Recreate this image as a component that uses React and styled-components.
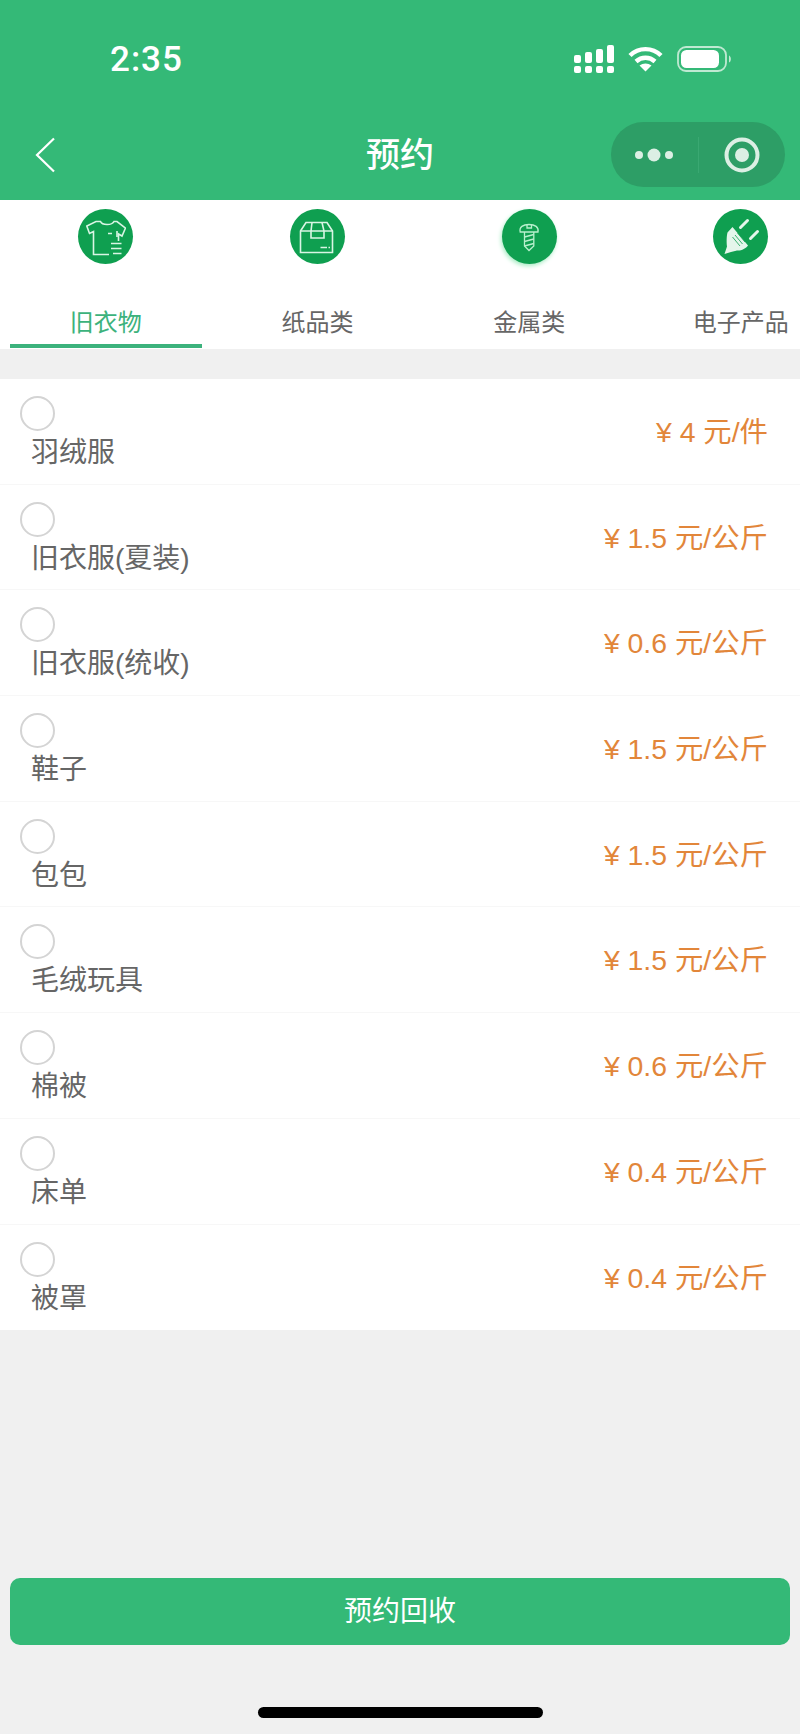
import React from 'react';
import styled, { createGlobalStyle } from 'styled-components';

const categories = [
	{ key: 'clothes', label: '旧衣物', active: true },
	{ key: 'paper', label: '纸品类' },
	{ key: 'metal', label: '金属类', glow: true },
	{ key: 'electronic', label: '电子产品' },
];

const items = [
	{ name: '羽绒服', price: '¥ 4 元/件' },
	{ name: '旧衣服(夏装)', price: '¥ 1.5 元/公斤' },
	{ name: '旧衣服(统收)', price: '¥ 0.6 元/公斤' },
	{ name: '鞋子', price: '¥ 1.5 元/公斤' },
	{ name: '包包', price: '¥ 1.5 元/公斤' },
	{ name: '毛绒玩具', price: '¥ 1.5 元/公斤' },
	{ name: '棉被', price: '¥ 0.6 元/公斤' },
	{ name: '床单', price: '¥ 0.4 元/公斤' },
	{ name: '被罩', price: '¥ 0.4 元/公斤' },
];

const SignalIcon = () => (
	<svg width="40" height="28" viewBox="0 0 40 28" fill="#fff">
		<rect x="0" y="10" width="7" height="8" rx="2" />
		<rect x="11" y="7" width="7" height="11" rx="2" />
		<rect x="22" y="4" width="7" height="14" rx="2" />
		<rect x="33" y="0" width="7" height="18" rx="2" />
		<rect x="0" y="21" width="7" height="7" rx="2" />
		<rect x="11" y="21" width="7" height="7" rx="2" />
		<rect x="22" y="21" width="7" height="7" rx="2" />
		<rect x="33" y="21" width="7" height="7" rx="2" />
	</svg>
);

const WifiIcon = () => (
	<svg width="35" height="26" viewBox="0 0 35 26" fill="none" stroke="#fff" strokeWidth="4.4">
		<path d="M2 9.5C10.5 1 24.5 1 33 9.5" />
		<path d="M8 15.5C13.5 10.5 21.5 10.5 27 15.5" />
		<path d="M17.5 25.5L11.5 19.5C15 16.8 20 16.8 23.5 19.5Z" fill="#fff" stroke="none" />
	</svg>
);

const BatteryIcon = () => (
	<svg width="56" height="26" viewBox="0 0 56 26">
		<rect x="1" y="1" width="48" height="24" rx="8" fill="none" stroke="#bfe9d2" strokeWidth="1.8" />
		<rect x="4" y="4" width="38" height="18" rx="5.5" fill="#fff" />
		<path d="M52 9.5C54.5 10.5 54.5 15.5 52 16.5Z" fill="#bfe9d2" />
	</svg>
);

const BackIcon = () => (
	<svg width="20" height="36" viewBox="0 0 20 36" fill="none" stroke="#fff" strokeWidth="2.2">
		<path d="M19 1.5L2 18L19 34.5" />
	</svg>
);

const DotsIcon = () => (
	<svg width="40" height="14" viewBox="0 0 40 14" fill="#dcefe4">
		<circle cx="5" cy="7" r="4" />
		<circle cx="20" cy="7" r="6.5" />
		<circle cx="35" cy="7" r="4" />
	</svg>
);

const RingIcon = () => (
	<svg width="36" height="36" viewBox="0 0 36 36">
		<circle cx="18" cy="18" r="15.5" fill="none" stroke="#dcefe4" strokeWidth="4" />
		<circle cx="18" cy="18" r="7" fill="#dcefe4" />
	</svg>
);

const categoryIcons = {
	clothes: (
		<svg width="40" height="40" viewBox="0 0 40 40" fill="none" stroke="#d9f5e4" strokeWidth="1.6">
			<path d="M23 37.5H7.5V14.5L3.5 16.5L0.8 9L10 4.5H14.5C16 8.5 26 8.5 28 4.5H31L39.5 11L36 19L32.5 17V24" />
			<path d="M22 16.5H26M31 14V20" />
			<path d="M25 26.5H35.5M25 31.5H35.5M27 36.5H35.5" />
		</svg>
	),
	paper: (
		<svg width="40" height="40" viewBox="0 0 40 40" fill="none" stroke="#d9f5e4" strokeWidth="1.6">
			<path d="M3.5 14L9 5.5H30L35.5 14V35.5H3.5Z" />
			<path d="M3.5 14H35.5M15 5.5L14 14V21H27V14L25 5.5" />
			<path d="M23.5 30.5H30M31.5 30.5H33" />
		</svg>
	),
	metal: (
		<svg width="40" height="40" viewBox="0 0 40 40" fill="none" stroke="#b8f0cd" strokeWidth="1.3">
			<path d="M11.2 15C10 10 14 7.5 20 7.5C26 7.5 30 10 29 15Z" />
			<path d="M18 7.8V11H22.5V7.8" />
			<path d="M15.5 15V29L20 33.5L24.8 29V15" />
			<path d="M15.5 20L24.8 17.5M15.5 24.5L24.8 22M15.5 29L24.8 26.5" />
		</svg>
	),
	electronic: (
		<svg width="44" height="44" viewBox="0 0 44 44" fill="none">
			<path d="M21.5 12.5L28.5 5.5M31.5 23.5L38.5 16.5" stroke="#e4f6eb" strokeWidth="3" strokeLinecap="round" />
			<path d="M13.5 12L29 30.5C27 33.5 22 36 18 35.5L12 37L5.5 39L8 31.5C7.5 28 7.5 21 8.5 17.5Z" fill="#e4f6eb" />
			<path d="M16 20L23.5 29M13.5 22L21 31M18.5 18L26 27" stroke="#0f9f50" strokeWidth="0.8" />
		</svg>
	),
};

const App = () => {
	return (
		<Page>
			<GlobalStyle />
			<Header>
				<StatusBar>
					<Time>2:35</Time>
					<StatusIcons>
						<SignalIcon />
						<WifiIcon />
						<BatteryIcon />
					</StatusIcons>
				</StatusBar>
				<NavBar>
					<BackButton>
						<BackIcon />
					</BackButton>
					<Title>预约</Title>
					<Capsule>
						<CapsuleSide>
							<DotsIcon />
						</CapsuleSide>
						<CapsuleDivider />
						<CapsuleSide>
							<RingIcon />
						</CapsuleSide>
					</Capsule>
				</NavBar>
			</Header>

			<Tabs>
				{categories.map((cat) => (
					<Tab key={cat.key}>
						<IconCircle $glow={cat.glow}>{categoryIcons[cat.key]}</IconCircle>
						<TabLabel $active={cat.active}>{cat.label}</TabLabel>
					</Tab>
				))}
			</Tabs>

			<List>
				{items.map((item) => (
					<Row key={item.name}>
						<RowLeft>
							<Radio />
							<ItemName>{item.name}</ItemName>
						</RowLeft>
						<Price>{item.price}</Price>
					</Row>
				))}
			</List>

			<Footer>
				<SubmitButton>预约回收</SubmitButton>
				<HomeBar />
			</Footer>
		</Page>
	);
};

export default App;

// Styled components
const GlobalStyle = createGlobalStyle`
	html, body {
		margin: 0;
		padding: 0;
		background: #f0f0f0;
	}

	* {
		box-sizing: border-box;
	}
`;

const Page = styled.div`
	width: 800px;
	height: 1734px;
	display: flex;
	flex-direction: column;
	overflow: hidden;
	background: #f0f0f0;
	font-family: 'Liberation Sans', 'Noto Sans CJK SC', sans-serif;
`;

const Header = styled.header`
	height: 200px;
	background: #34b977;
	color: #fff;
`;

const StatusBar = styled.div`
	height: 122px;
	padding: 45px 67px 0 110px;
	display: flex;
	justify-content: space-between;
	align-items: flex-start;
`;

const Time = styled.span`
	font-family: Roboto, 'Liberation Sans', sans-serif;
	font-size: 35px;
	font-weight: 500;
	letter-spacing: 1px;
	line-height: 30px;
`;

const StatusIcons = styled.div`
	display: flex;
	align-items: center;
	gap: 14px;
`;

const NavBar = styled.div`
	height: 65px;
	padding: 0 15px;
	display: grid;
	grid-template-columns: 1fr auto 1fr;
	align-items: center;
`;

const BackButton = styled.div`
	width: 20px;
	height: 36px;
	margin-left: 20px;
	display: flex;
`;

const Title = styled.h1`
	margin: 0;
	font-size: 34px;
	font-weight: 500;
	line-height: 40px;
`;

const Capsule = styled.div`
	justify-self: end;
	width: 174px;
	height: 65px;
	border-radius: 33px;
	background: #2d9e66;
	display: flex;
	align-items: center;
`;

const CapsuleSide = styled.div`
	flex: 1;
	display: flex;
	justify-content: center;
	align-items: center;
`;

const CapsuleDivider = styled.div`
	width: 1px;
	height: 36px;
	background: #3aa872;
`;

const Tabs = styled.nav`
	height: 149px;
	background: #fff;
	display: flex;
	overflow: hidden;
`;

const Tab = styled.div`
	flex: 0 0 211.67px;
	padding: 9px 10px 0;
	display: flex;
	flex-direction: column;
	align-items: center;
`;

const IconCircle = styled.div`
	width: 55px;
	height: 55px;
	border-radius: 50%;
	background: #0f9f50;
	display: flex;
	align-items: center;
	justify-content: center;
	box-shadow: ${(props) => (props.$glow ? '-1px 2px 4px #a8ecc4' : 'none')};
`;

const TabLabel = styled.div`
	margin-top: 39px;
	width: 100%;
	height: 45px;
	text-align: center;
	font-size: 24px;
	line-height: 40px;
	white-space: nowrap;
	color: ${(props) => (props.$active ? '#3cb27c' : '#666')};
	border-bottom: 4px solid ${(props) => (props.$active ? '#3cb27c' : 'transparent')};
`;

const List = styled.main`
	margin-top: 30px;
	background: #fff;
`;

const Row = styled.div`
	height: 105.7px;
	padding: 17px 32px 0 20px;
	display: flex;
	justify-content: space-between;
	border-bottom: 1px solid #f7f7f7;

	&:last-child {
		border-bottom: none;
	}
`;

const RowLeft = styled.div`
	display: flex;
	flex-direction: column;
`;

const Radio = styled.span`
	width: 35px;
	height: 35px;
	border-radius: 50%;
	border: 2px solid #d4d4d4;
	background: #fff;
`;

const ItemName = styled.span`
	margin: 4px 0 0 11px;
	font-size: 28px;
	line-height: 36px;
	color: #666;
	white-space: nowrap;
`;

const Price = styled.span`
	margin-top: 18px;
	font-size: 28.4px;
	line-height: 36px;
	color: #e2863a;
	white-space: nowrap;
`;

const Footer = styled.footer`
	margin-top: auto;
	padding: 0 10px 16px;
	display: flex;
	flex-direction: column;
	align-items: center;
`;

const SubmitButton = styled.button`
	width: 100%;
	height: 67px;
	border: none;
	border-radius: 10px;
	background: #34b977;
	color: #fff;
	font-family: inherit;
	font-size: 28px;
	line-height: 67px;
	padding: 0;
`;

const HomeBar = styled.div`
	margin-top: 62px;
	width: 285px;
	height: 11px;
	border-radius: 6px;
	background: #000;
`;
